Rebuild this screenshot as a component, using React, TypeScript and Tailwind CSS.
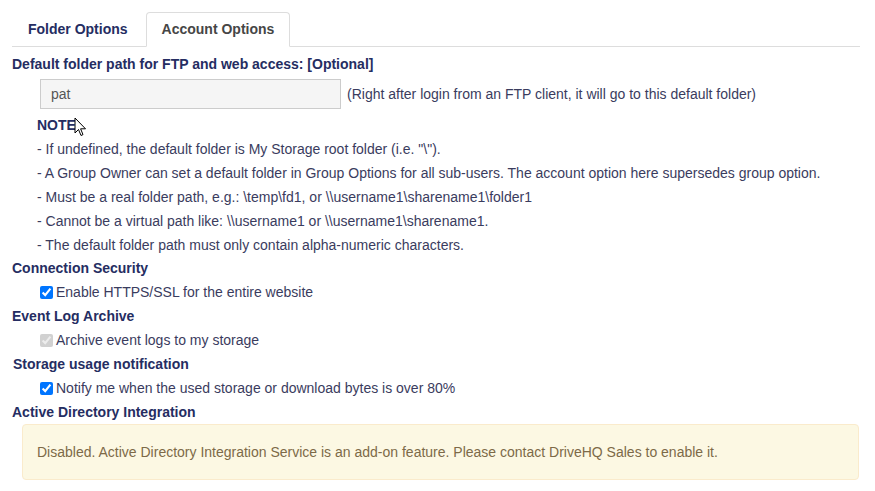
import React from "react";

const Heading = ({ children, className = "" }: { children: React.ReactNode; className?: string }) => (
  <div className={`h-6 flex items-center font-bold text-[14px] text-[#252d62] whitespace-nowrap ${className}`}>{children}</div>
);

const Check = ({ label, disabled = false }: { label: string; disabled?: boolean }) => (
  <div className="h-6 flex items-center pl-[28px]">
    <input
      type="checkbox"
      defaultChecked
      disabled={disabled}
      className="w-[13px] h-[13px] m-0 accent-[#0075ff]"
    />
    <span className="ml-[3px] text-[14px] text-[#3a3c5e]">{label}</span>
  </div>
);

export default function App() {
  const notes = [
    '- If undefined, the default folder is My Storage root folder (i.e. "\\").',
    "- A Group Owner can set a default folder in Group Options for all sub-users. The account option here supersedes group option.",
    "- Must be a real folder path, e.g.: \\temp\\fd1, or \\\\username1\\sharename1\\folder1",
    "- Cannot be a virtual path like: \\\\username1 or \\\\username1\\sharename1.",
    "- The default folder path must only contain alpha-numeric characters.",
  ];
  return (
    <div
      className="relative w-[875px] h-[491px] bg-white overflow-hidden"
      style={{ fontFamily: '"Liberation Sans", Arial, sans-serif' }}
    >
      <div className="pt-[12px] pl-[12px] pr-[15px]">
        <div className="flex border-b border-[#dddddd] h-[35px]">
          <div className="h-[34px] px-[16px] flex items-center font-bold text-[14px] text-[#252d62] mr-[2px] whitespace-nowrap">
            Folder Options
          </div>
          <div className="h-[35px] px-[15px] flex items-center font-bold text-[14px] text-[#464646] bg-white border border-[#dddddd] border-b-white rounded-t-[4px] -mb-px whitespace-nowrap">
            Account Options
          </div>
        </div>
      </div>

      <div className="pl-[12px] mt-[5px]">
        <Heading>Default folder path for FTP and web access: [Optional]</Heading>
        <div className="flex items-center mt-[3px] pl-[28px]">
          <div className="w-[301px] h-[30px] border border-[#cccccc] bg-[#f5f5f5] flex items-center pl-[10px] text-[14px] text-[#555555]">
            pat
          </div>
          <span className="ml-[6px] text-[14px] text-[#3a3c5e] whitespace-nowrap">
            (Right after login from an FTP client, it will go to this default folder)
          </span>
        </div>
        <div className="mt-[4px] pl-[25px]">
          <Heading>NOTE:</Heading>
          {notes.map((n, i) => (
            <div key={i} className="h-6 flex items-center text-[14px] text-[#3a3c5e] whitespace-nowrap">
              {n}
            </div>
          ))}
        </div>
        <div className="-mt-px">
          <Heading>Connection Security</Heading>
          <Check label="Enable HTTPS/SSL for the entire website" />
          <Heading>Event Log Archive</Heading>
          <Check label="Archive event logs to my storage" disabled />
          <Heading className="pl-px">Storage usage notification</Heading>
          <Check label="Notify me when the used storage or download bytes is over 80%" />
          <Heading>Active Directory Integration</Heading>
          <div className="ml-[10px] mr-[16px] h-[56px] border border-[#faebcc] bg-[#fcf8e3] rounded-[4px] flex items-center pl-[14px] text-[14px] text-[#7d6a48]">
            Disabled. Active Directory Integration Service is an add-on feature. Please contact DriveHQ Sales to enable it.
          </div>
        </div>
      </div>

      <svg className="absolute left-[74px] top-[117px]" width="13" height="20" viewBox="0 0 13 20">
        <path d="M1 1 L1 16 L4.5 12.5 L7 18.5 L9 17.6 L6.6 11.8 L11.5 11.8 Z" fill="white" stroke="black" strokeWidth="1" strokeLinejoin="round" />
      </svg>
    </div>
  );
}
